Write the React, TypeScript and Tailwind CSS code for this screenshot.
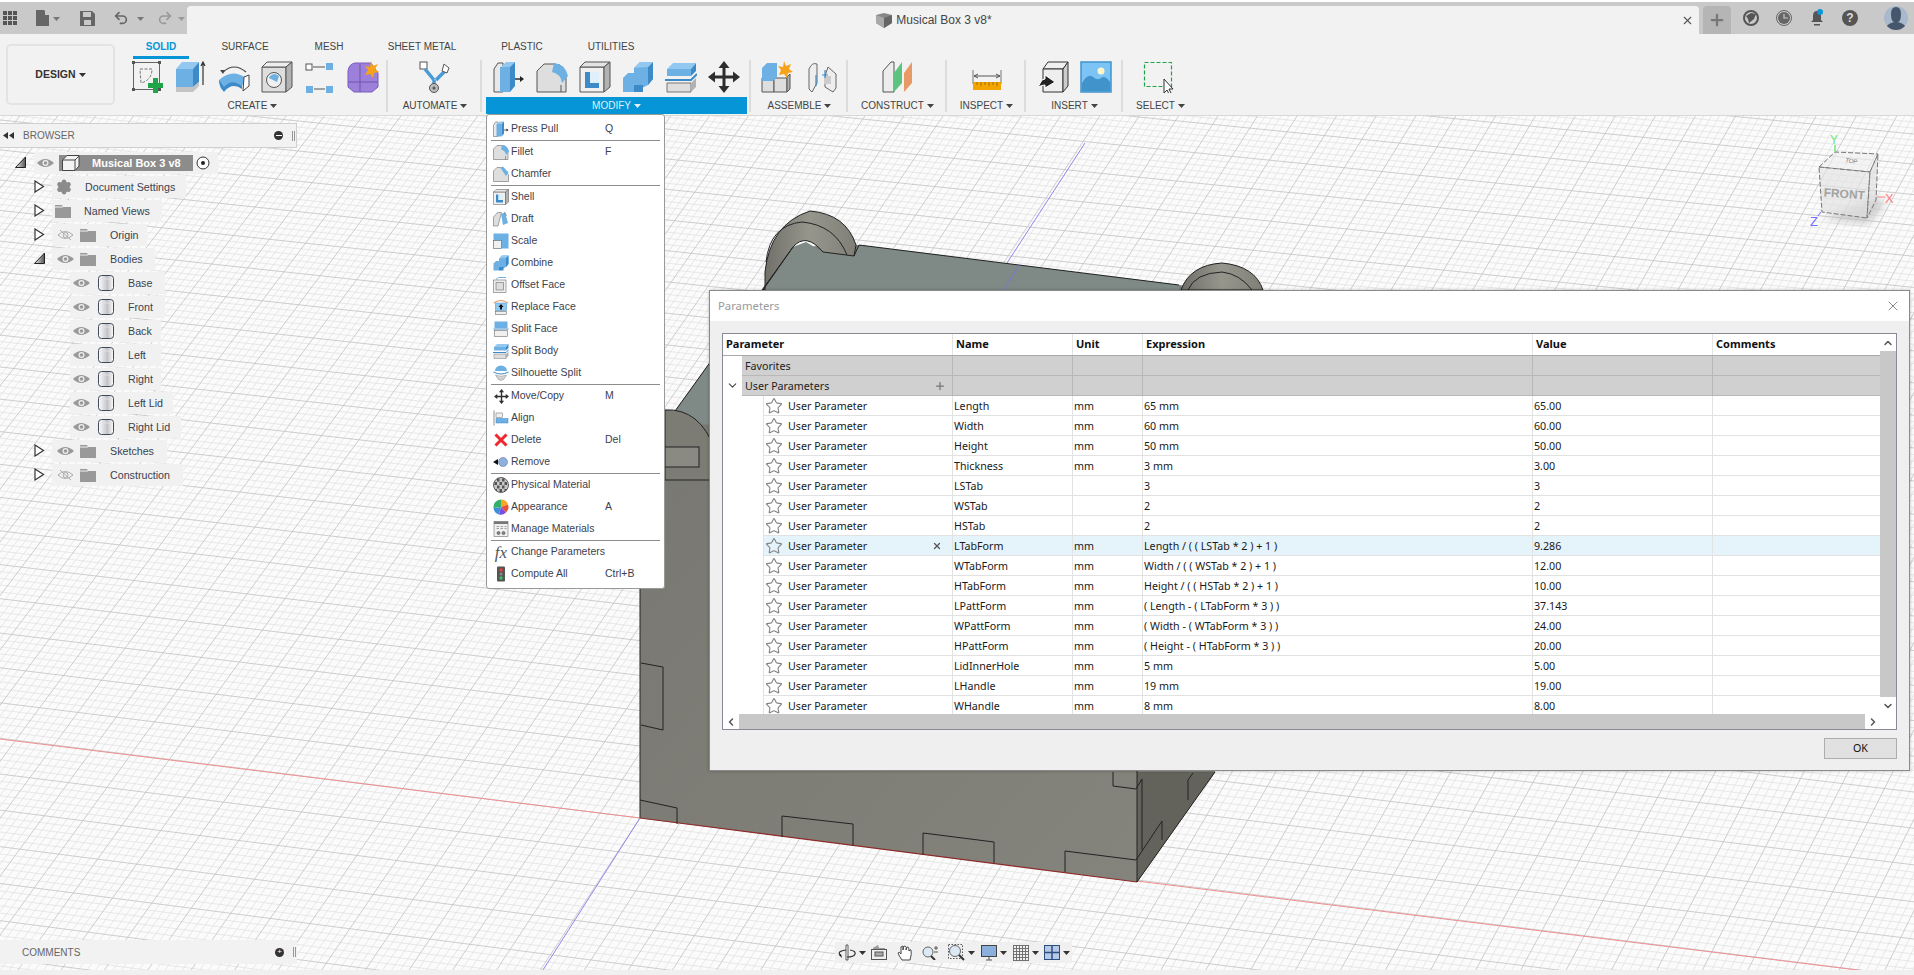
import React, { useMemo } from "react";
import { ChevronDown, ChevronLeft, ChevronRight, ChevronUp, Plus, Redo2, Settings, Star, Undo2, X } from "lucide-react";

const B1 = "#6cb0e4";
const B2 = "#3c8bc8";
const B3 = "#93c8f0";
const G1 = "#dedede";
const G2 = "#b2b2b2";
const K = "#555";

const Sv: React.FC<{ size?: number; children: React.ReactNode }> = ({ size = 32, children }) => (
  <svg width={size} height={size} viewBox="0 0 32 32" className="shrink-0">
    {children}
  </svg>
);

type IconProps = { size?: number };

const SketchIcon = ({ size }: IconProps) => (
  <Sv size={size}>
    <rect x="1.5" y="1.5" width="26" height="27" fill="none" stroke="#666" />
    <path d="M8 8h12q0 11-11 14z" fill="none" stroke="#777" strokeDasharray="3 1.5" />
    {[[0, 0], [26, 0], [0, 27], [26, 27]].map(([x, y]) => (
      <rect key={x + "-" + y} x={x} y={y} width="3" height="3" fill="#555" />
    ))}
    <path d="M21 17h5v5h5v5h-5v5h-5v-5h-5v-5h5z" fill="#1fa44a" />
  </Sv>
);
const ExtrudeIcon = ({ size }: IconProps) => (
  <Sv size={size}>
    <polygon points="1,8 1,26 18,26 18,8" fill={B1} />
    <polygon points="1,8 7,1 24,1 18,8" fill={B3} />
    <polygon points="18,8 24,1 24,21 18,26" fill={B2} />
    <polygon points="1,26 18,26 24,21 24,25 18,31 1,31" fill="#c4c4c4" />
    <path d="M28 24V2M26 5l2-4 2 4" fill="none" stroke="#333" strokeWidth="1.2" />
  </Sv>
);
const RevolveIcon = ({ size }: IconProps) => (
  <Sv size={size}>
    <path d="M5 11Q16 1 28 11" fill="none" stroke="#444" strokeWidth="1.2" />
    <path d="M2 9l3 4 2-4z" fill="#444" />
    <path d="M1 19Q14 7 28 17L24 25Q14 17 6 28Q1 26 1 19z" fill={B1} />
    <path d="M1 19Q1 26 6 31Q14 21 24 28V25Q14 17 6 26z" fill={B2} />
    <path d="M26 16l5-2v11l-6 5z" fill="#fff" stroke="#444" />
  </Sv>
);
const HoleIcon = ({ size }: IconProps) => (
  <Sv size={size}>
    <polygon points="1,6 25,6 25,31 1,31" fill={G1} stroke={K} />
    <polygon points="1,6 6,1 31,1 25,6" fill="#eee" stroke={K} />
    <polygon points="25,6 31,1 31,26 25,31" fill={G2} stroke={K} />
    <circle cx="13" cy="19" r="7.5" fill="#f0f0f0" stroke={K} />
    <path d="M8 17a6 6 0 0 1 10 -2l-2 6z" fill={B1} />
  </Sv>
);
const BoxLinkIcon = ({ size }: IconProps) => (
  <Sv size={size}>
    <rect x="2" y="3" width="6" height="6" fill="#fff" stroke="#555" />
    <rect x="22" y="2" width="7" height="7" fill={B1} />
    <rect x="2" y="25" width="7" height="7" fill={B1} />
    <rect x="22" y="25" width="7" height="7" fill={B1} />
    <path d="M9 6h12M10 28h11" stroke="#555" />
  </Sv>
);
const FormIcon = ({ size }: IconProps) => (
  <Sv size={size}>
    <path d="M1 10Q2 3 8 2h16l7 10v14l-6 5H7l-6-5z" fill="#9c80da" stroke="#7a5cc0" />
    <path d="M1 21h30M13 3v28" stroke="#6f55ad" />
    <polygon points="24,0 26,5 31,3 28,8 32,11 27,12 26,17 23,13 18,14 21,9 18,5 23,6" fill="#f7a21b" />
  </Sv>
);
const AutomateIcon = ({ size }: IconProps) => (
  <Sv size={size}>
    <rect x="1" y="1" width="7" height="7" fill="#fff" stroke="#555" />
    <path d="M6 8l9 11M27 9l-10 10M15 19l0 6" stroke="#4a9ad6" strokeWidth="3.5" fill="none" />
    <path d="M25 3l5 4-2 5-5-2z" fill="#fff" stroke="#555" />
    <circle cx="15" cy="27" r="4.5" fill="#bbb" stroke="#555" />
    <circle cx="15" cy="27" r="1.5" fill="#555" />
  </Sv>
);
const PressPullIcon = ({ size }: IconProps) => (
  <Sv size={size}>
    <path d="M1 31V8L5 2h5v29H1z" fill="#e8e8e8" stroke="#555" />
    <polygon points="8,6 13,1 22,1 17,6" fill={B3} />
    <polygon points="7,6 17,6 17,31 7,31" fill={B1} />
    <polygon points="17,6 22,1 22,25 17,31" fill={B2} />
    <path d="M22 18h6" stroke="#222" strokeWidth="1.4" />
    <path d="M27 15l4 3-4 3z" fill="#222" />
  </Sv>
);
const FilletIcon = ({ size }: IconProps) => (
  <Sv size={size}>
    <path d="M1 31V10L8 3h10q12 0 12 14v14z" fill={G1} stroke={K} />
    <path d="M18 2q11 1 14 13l-6 7q-1-9-10-11z" fill={B1} />
    <path d="M25 24v7" stroke={K} />
  </Sv>
);
const ChamferIcon = ({ size }: IconProps) => (
  <Sv size={size}>
    <path d="M1 31V10L8 3h9l14 14v14z" fill={G1} stroke={K} />
    <polygon points="15,4 20,1 31,13 26,20" fill={B1} />
  </Sv>
);
const ShellIcon = ({ size }: IconProps) => (
  <Sv size={size}>
    <polygon points="1,6 25,6 25,31 1,31" fill="#f0f0f0" stroke={K} />
    <polygon points="1,6 6,1 31,1 25,6" fill="#e4e4e4" stroke={K} />
    <polygon points="25,6 31,1 31,26 25,31" fill={G2} stroke={K} />
    <path d="M6 11h5v11h9v5H6z" fill={B2} />
    <rect x="11" y="11" width="9" height="11" fill="#dff0fb" />
  </Sv>
);
const DraftIcon = ({ size }: IconProps) => (
  <Sv size={size}>
    <path d="M1 30V12L9 3h8l-7 27z" fill={G1} stroke={K} />
    <polygon points="16,6 24,3 30,24 20,28" fill={B1} />
    <path d="M23 2l4 8" stroke="#333" />
  </Sv>
);
const ScaleIcon = ({ size }: IconProps) => (
  <Sv size={size}>
    <rect x="1" y="1" width="30" height="30" fill={B1} />
    <rect x="1" y="15" width="16" height="16" fill="#f0f0f0" stroke={K} />
  </Sv>
);
const CombineIcon = ({ size }: IconProps) => (
  <Sv size={size}>
    <polygon points="1,17 6,12 12,12 12,31 1,31" fill={B1} />
    <polygon points="12,7 18,1 31,1 31,18 26,24 12,31 12,12" fill={B1} />
    <polygon points="26,6 31,1 31,18 26,24" fill={B2} />
    <polygon points="12,7 18,1 31,1 26,6" fill={B3} />
    <polygon points="12,24 21,24 21,31 12,31" fill={B2} />
  </Sv>
);
const OffsetIcon = ({ size }: IconProps) => (
  <Sv size={size}>
    <path d="M6 5l5-4h15" fill="none" stroke={B1} strokeWidth="2" />
    <rect x="1" y="6" width="25" height="25" fill="#f0f0f0" stroke={K} />
    <rect x="6" y="11" width="15" height="15" fill="#ddd" stroke={K} />
  </Sv>
);
const ReplaceIcon = ({ size }: IconProps) => (
  <Sv size={size}>
    <path d="M1 8Q15-2 30 8" fill="none" stroke="#f0905a" strokeWidth="2" />
    <rect x="5" y="8" width="22" height="15" fill={B3} stroke={B2} />
    <path d="M16 10l5 6h-3v5h-4v-5h-3z" fill="#111" />
    <rect x="5" y="25" width="22" height="6" fill="#f0f0f0" stroke={K} />
  </Sv>
);
const SplitFaceIcon = ({ size }: IconProps) => (
  <Sv size={size}>
    <rect x="3" y="1" width="26" height="13" fill={B1} />
    <path d="M1 16h30" stroke={B2} strokeWidth="2" />
    <rect x="3" y="19" width="26" height="12" fill="#efefef" stroke={K} />
  </Sv>
);
const SplitBodyIcon = ({ size }: IconProps) => (
  <Sv size={size}>
    <polygon points="2,8 8,2 31,2 26,8" fill={B3} />
    <polygon points="2,8 26,8 26,15 2,15" fill={B1} />
    <polygon points="26,8 31,2 31,10 26,15" fill={B2} />
    <path d="M0 19l26 0 6-6" fill="none" stroke={B2} strokeWidth="2" />
    <polygon points="2,22 26,22 26,31 2,31" fill={G1} stroke="#777" />
    <polygon points="26,22 31,17 31,26 26,31" fill={G2} />
  </Sv>
);
const SilhouetteIcon = () => (
  <Sv size={16}>
    <path d="M4 12a12 11 0 0 1 24 0z" fill={B1} />
    <path d="M1 14Q16 22 31 14" fill="none" stroke={B2} strokeWidth="2" />
    <path d="M5 20Q16 25 27 20Q22 31 16 31T5 20z" fill="#d4d4d4" stroke="#888" />
  </Sv>
);
const MoveIcon = ({ size }: IconProps) => (
  <Sv size={size}>
    <path
      d="M16 0l5.5 7h-4v7.5h7.5v-4L32 16l-7 5.5v-4h-7.500v7.5h4L16 32l-5.5-7h4v-7.5H7v4L0 16l7-5.5v4h7.5V7h-4z"
      fill="#2d2d2d"
    />
  </Sv>
);
const AlignIcon = () => (
  <Sv size={16}>
    <path d="M2 1v30" stroke="#444" strokeWidth="1.2" />
    <rect x="6" y="6" width="13" height="9" fill="#f0f0f0" stroke="#666" />
    <rect x="6" y="17" width="24" height="9" fill={B1} stroke={B2} />
  </Sv>
);
const RemoveIcon = () => (
  <Sv size={16}>
    <path d="M0 16l10-6v12z" fill="#111" />
    <circle cx="20" cy="16" r="9" fill="#8fb0dc" stroke="#4d6a96" />
  </Sv>
);
const MaterialIcon = () => (
  <Sv size={16}>
    <defs>
      <clipPath id="materialClip">
        <circle cx="16" cy="16" r="15" />
      </clipPath>
    </defs>
    <g clipPath="url(#materialClip)">
      <rect width="32" height="32" fill="#c8c8c8" />
      {[[10, 4], [20, 4], [5, 11], [15, 11], [25, 11], [10, 18], [20, 18], [5, 25], [15, 25], [25, 25]].map(([x, y]) => (
        <rect key={x + "-" + y} x={x - 2} y={y - 1} width="5" height="6" fill="#555" />
      ))}
    </g>
    <circle cx="16" cy="16" r="15" fill="none" stroke="#333" strokeWidth="1.5" />
  </Sv>
);
const AppearanceIcon = () => (
  <Sv size={16}>
    <path d="M16 16V1A15 15 0 0 1 30 11z" fill="#f5a623" />
    <path d="M16 16L30 11A15 15 0 0 1 26 27z" fill="#e8503a" />
    <path d="M16 16L26 27A15 15 0 0 1 12 31z" fill="#7a4fe0" />
    <path d="M16 16L12 31A15 15 0 0 1 1 18z" fill="#3f8fdc" />
    <path d="M16 16L1 18A15 15 0 0 1 16 1z" fill="#35b06a" />
  </Sv>
);
const ManageIcon = () => (
  <Sv size={16}>
    <rect x="2" y="1" width="28" height="30" fill="#f0f0f0" stroke="#555" />
    <rect x="2" y="1" width="28" height="5" fill="#777" />
    <path d="M7 11h5M15 11h5M23 11h4M7 15h5M15 15h5M23 15h4" stroke="#888" strokeWidth="1.5" />
    <circle cx="11" cy="24" r="3" fill="#888" stroke="#333" />
    <circle cx="21" cy="24" r="3" fill="#888" stroke="#333" />
  </Sv>
);
const ComputeIcon = () => (
  <Sv size={16}>
    <rect x="8" y="1" width="16" height="30" rx="2" fill="#555" />
    <circle cx="16" cy="8" r="3.5" fill="#e8403a" />
    <circle cx="16" cy="16" r="3" fill="#888" />
    <circle cx="16" cy="24" r="3.5" fill="#35c06a" />
  </Sv>
);
const DeleteIcon = () => (
  <Sv size={16}>
    <path d="M5 5l22 22M27 5L5 27" stroke="#f0282d" strokeWidth="6" />
  </Sv>
);

const AssembleIcon = () => (
  <Sv>
    <polygon points="1,17 13,17 13,31 1,31" fill={G1} stroke={K} />
    <polygon points="13,17 26,17 26,31 13,31" fill={G1} stroke={K} />
    <polygon points="26,16 29,13 29,28 26,31" fill={G2} stroke={K} />
    <polygon points="1,7 6,2 16,2 16,16 12,20 1,20" fill={B1} />
    <polygon points="23,0 25,5 30,3 28,8 32,11 27,12 26,17 23,13 18,14 20,9 17,5 22,6" fill="#f7a21b" />
  </Sv>
);
const JointIcon = () => (
  <Sv>
    <path d="M2 28V8Q5 1 10 3V22L5 31z" fill="#eee" stroke="#666" />
    <path d="M18 15l3-9 8 7v14l-3 4-8-5z" fill="#eee" stroke="#666" />
    <rect x="17" y="15" width="7" height="8" fill="#ccc" />
    <path d="M9 14v11M18 9v8M15 14h6" stroke={B2} strokeWidth="1.2" />
  </Sv>
);
const ConstructIcon = () => (
  <Sv>
    <polygon points="1,10 9,1 12,1 12,31 1,31" fill="#ececec" stroke={K} />
    <polygon points="12,12 20,1 20,22 12,31" fill="#5cc47e" />
    <polygon points="22,12 30,1 30,22 22,31" fill="#e89a66" />
  </Sv>
);
const InspectIcon = () => (
  <Sv>
    <path d="M2 9v14M30 9v14" stroke="#777" />
    <path d="M3 15h26M7 13l-4 2 4 2M25 13l4 2-4 2" stroke="#555" fill="none" />
    <rect x="2" y="21" width="28" height="8" fill="#f2a500" />
    <path d="M6 21v3M10 21v4M14 21v3M18 21v4M22 21v3M26 21v4" stroke="#a46e00" />
  </Sv>
);
const InsertIcon = () => (
  <Sv>
    <polygon points="5,8 10,1 30,1 25,8" fill="#f0f0f0" stroke="#333" />
    <polygon points="5,8 25,8 25,31 5,31" fill="#eee" stroke="#333" />
    <polygon points="25,8 30,1 30,25 25,31" fill="#ccc" stroke="#333" />
    <path d="M0 26l4-7 3-1v-4l10 7-10 6v-3q-3 0-7 2z" fill="#222" stroke="#fff" />
  </Sv>
);
const ImageIcon = () => (
  <Sv>
    <rect x="1" y="1" width="30" height="30" fill="#7cc4f5" stroke="#4193cc" strokeWidth="1.5" />
    <circle cx="21" cy="10" r="3.5" fill="#fff7c8" />
    <path d="M2 30V22q6-10 11-6t8 1q4-3 9 4v9z" fill="#4193cc" />
  </Sv>
);
const SelectIcon = () => (
  <Sv>
    <rect x="1.5" y="1.5" width="27" height="24" fill="none" stroke="#1fa44a" strokeDasharray="4 2" strokeWidth="1.2" />
    <path d="M21 18v14l3-3 2 4 2-1-2-4h4z" fill="#fff" stroke="#333" />
  </Sv>
);

const Caret = () => (
  <svg width="7" height="4" viewBox="0 0 7 4" className="ml-[3px] inline-block shrink-0">
    <path d="M0 0h7L3.5 4z" fill="currentColor" />
  </svg>
);

const RibbonGroup: React.FC<{ label: string; className: string; labelClass?: string; children: React.ReactNode; last?: boolean }> = ({
  label,
  className,
  labelClass = "",
  children,
  last,
}) => (
  <div className={`relative flex h-[56px] flex-col ${className} ${last ? "" : "after:absolute after:right-0 after:top-[1px] after:h-[52px] after:w-[2px] after:bg-[#dcdcdc]"}`}>
    <div className="mt-[2px] flex h-[32px] items-center justify-center">{children}</div>
    <div className={`mt-[4px] flex h-[17px] items-center justify-center text-[10px] text-[#444] ${labelClass}`}>
      {label}
      <Caret />
    </div>
  </div>
);

const TabLabel: React.FC<{ label: string; className: string; active?: boolean }> = ({ label, className, active }) => (
  <div className={`relative flex h-[25px] items-center justify-center text-[10px] ${className} ${active ? "font-bold text-[#0696d7]" : "text-[#444]"}`}>
    {label}
    {active && <div className="absolute bottom-0 left-0 right-0 h-[3px] bg-[#0696d7]" />}
  </div>
);

const Ribbon = () => (
  <div className="flex h-[82px] shrink-0 border-b border-[#d8d8d8] bg-[#f2f2f2]">
    <div className="flex w-[125px] shrink-0 items-start pl-[6px] pt-[10px]">
      <div className="flex h-[61px] w-[109px] items-center justify-center rounded-[5px] border-2 border-[#e3e3e3] pt-[1px] text-[10.5px] font-bold text-[#333]">
        DESIGN
        <Caret />
      </div>
    </div>
    <div className="flex flex-col">
      <div className="ml-[8px] flex">
        <TabLabel label="SOLID" className="w-[56px]" active />
        <TabLabel label="SURFACE" className="w-[112px]" />
        <TabLabel label="MESH" className="w-[56px]" />
        <TabLabel label="SHEET METAL" className="w-[130px]" />
        <TabLabel label="PLASTIC" className="w-[70px]" />
        <TabLabel label="UTILITIES" className="w-[108px]" />
      </div>
      <div className="flex">
        <RibbonGroup label="CREATE" className="w-[263px]" labelClass="pr-[8px]">
          <div className="flex gap-[11px] pr-[3px]">
            <SketchIcon />
            <ExtrudeIcon />
            <RevolveIcon />
            <HoleIcon />
            <BoxLinkIcon />
            <FormIcon />
          </div>
        </RibbonGroup>
        <RibbonGroup label="AUTOMATE" className="w-[94px]">
          <AutomateIcon />
        </RibbonGroup>
        <div className="relative flex h-[56px] w-[269px] flex-col after:absolute after:right-0 after:top-[1px] after:h-[52px] after:w-[2px] after:bg-[#dcdcdc]">
          <div className="ml-[11px] mt-[2px] flex h-[32px] items-center gap-[11px]">
            <PressPullIcon />
            <FilletIcon />
            <ShellIcon />
            <CombineIcon />
            <SplitBodyIcon />
            <MoveIcon />
          </div>
          <div className="ml-[4px] mt-[4px] flex h-[17px] w-[261px] items-center justify-center bg-[#0696d7] text-[10px] text-[#dff1fb]">
            MODIFY
            <Caret />
          </div>
        </div>
        <RibbonGroup label="ASSEMBLE" className="w-[97px]">
          <div className="flex gap-[14px]">
            <AssembleIcon />
            <JointIcon />
          </div>
        </RibbonGroup>
        <RibbonGroup label="CONSTRUCT" className="w-[99px]">
          <ConstructIcon />
        </RibbonGroup>
        <RibbonGroup label="INSPECT" className="w-[79px]">
          <InspectIcon />
        </RibbonGroup>
        <RibbonGroup label="INSERT" className="w-[97px]">
          <div className="flex gap-[10px]">
            <InsertIcon />
            <ImageIcon />
          </div>
        </RibbonGroup>
        <RibbonGroup label="SELECT" className="w-[72px]" labelClass="pl-[3px]" last>
          <SelectIcon />
        </RibbonGroup>
      </div>
    </div>
  </div>
);

const TitleBar = () => (
  <div className="flex h-[34px] shrink-0 border-t-2 border-white bg-[#c9c9c9]">
    <div className="flex w-[187px] shrink-0 items-center text-[#666]">
      <svg width="15" height="14" viewBox="0 0 15 14" className="ml-[3px]">
        {[0, 5, 10].map((x) =>
          [0, 5, 10].map((y) => <rect key={x + "-" + y} x={x} y={y} width="4" height="4" fill="#555" />)
        )}
      </svg>
      <svg width="14" height="16" viewBox="0 0 14 16" className="ml-[18px]">
        <path d="M0 0h8l5 5v11H0z" fill="#666" />
        <path d="M9 0l5 5H9z" fill="#c9c9c9" />
      </svg>
      <span className="text-[#777]"><Caret /></span>
      <svg width="15" height="15" viewBox="0 0 15 15" className="ml-[20px]">
        <path d="M0 0h12l3 3v12H0z" fill="#666" />
        <rect x="3" y="1" width="8" height="5" fill="#c9c9c9" />
        <rect x="4" y="9" width="7" height="5" fill="#c9c9c9" />
      </svg>
      <Undo2 size={16} strokeWidth={2.5} className="ml-[18px] text-[#666]" />
      <span className="ml-[5px] text-[#777]"><Caret /></span>
      <Redo2 size={16} strokeWidth={2.5} className="ml-[13px] text-[#999]" />
      <span className="ml-[2px] text-[#999]"><Caret /></span>
    </div>
    <div className="mt-[4px] flex h-[28px] w-[1512px] items-center rounded-t-[4px] bg-[#f2f2f2]">
      <div className="flex flex-1 items-center justify-center text-[12px] text-[#444]">
        <svg width="16" height="15" viewBox="0 0 16 15" className="mr-[4px]">
          <path d="M0 2l8-2 8 2v8l-8 5-8-5z" fill="#888" />
          <path d="M0 2l8 3v10l-8-5z" fill="#aaa" />
          <path d="M8 5l8-3v8l-8 5z" fill="#666" />
        </svg>
        Musical Box 3 v8*
      </div>
      <X size={13} strokeWidth={2} className="mr-[5px] text-[#555]" />
    </div>
    <div className="ml-[4px] mt-[4px] flex h-[28px] w-[28px] items-center justify-center rounded-t-[4px] bg-[#b5b5b5]">
      <Plus size={18} strokeWidth={3} className="text-[#777]" />
    </div>
    <div className="flex flex-1 items-center pl-[12px]">
      <svg width="16" height="16" viewBox="0 0 16 16">
        <circle cx="8" cy="8" r="7" fill="none" stroke="#555" strokeWidth="2" />
        <path d="M3 6l5-3 5 1-2 5-5 4-1-4z" fill="#555" />
      </svg>
      <svg width="16" height="16" viewBox="0 0 16 16" className="ml-[17px]">
        <circle cx="8" cy="8" r="7.5" fill="none" stroke="#666" />
        <circle cx="8" cy="8" r="6" fill="#666" />
        <path d="M8 4v4h4" fill="none" stroke="#c9c9c9" strokeWidth="1.2" />
      </svg>
      <svg width="16" height="18" viewBox="0 0 16 18" className="ml-[17px]">
        <path d="M8 2q4 0 4 5v4l2 2H2l2-2V7q0-5 4-5z" fill="#555" />
        <rect x="5" y="15" width="6" height="1.5" fill="#555" />
        <circle cx="11" cy="3" r="3" fill="#0696d7" />
      </svg>
      <div className="ml-[17px] flex h-[16px] w-[16px] items-center justify-center rounded-full bg-[#555] text-[12px] font-bold text-[#ddd]">?</div>
      <div className="relative ml-[26px] h-[24px] w-[24px] overflow-hidden rounded-full bg-[#a9b8cc]">
        <svg width="24" height="24" viewBox="0 0 24 24" className="absolute inset-0">
          <path d="M12 1q5 0 5 7t-3 8q8 2 9 8H1q1-6 9-8-3-1-3-8t5-7z" fill="#46566c" />
        </svg>
      </div>
    </div>
  </div>
);

const Eye: React.FC<{ off?: boolean }> = ({ off }) =>
  off ? (
    <svg width="17" height="12" viewBox="0 0 17 12" className="shrink-0">
      <path d="M1 6q7-7 15 0q-8 7-15 0z" fill="none" stroke="#aaa" />
      <circle cx="8.5" cy="6" r="2.5" fill="none" stroke="#aaa" />
      <path d="M3 1l11 10" stroke="#aaa" />
    </svg>
  ) : (
    <svg width="17" height="12" viewBox="0 0 17 12" className="shrink-0">
      <path d="M0 6q8-8 17 0q-9 8-17 0z" fill="#999" />
      <circle cx="8.5" cy="6" r="3" fill="#f1f1f1" />
      <circle cx="8.5" cy="6" r="1.8" fill="#999" />
    </svg>
  );

const Folder = () => (
  <svg width="16" height="13" viewBox="0 0 16 13" className="shrink-0">
    <path d="M0 0h7l1 2h8v11H0z" fill="#999" />
    <path d="M0 2h8" stroke="#f1f1f1" />
  </svg>
);

const BodyIcon = () => (
  <svg width="16" height="16" viewBox="0 0 16 16" className="shrink-0">
    <defs>
      <linearGradient id="bodyFill" x1="0" x2="1">
        <stop offset="0" stopColor="#fff" />
        <stop offset="0.6" stopColor="#c2c2c8" />
        <stop offset="1" stopColor="#fff" />
      </linearGradient>
    </defs>
    <rect x="0.5" y="0.5" width="15" height="15" rx="3" fill="url(#bodyFill)" stroke="#3d4a5c" />
    <path d="M1 4h14" stroke="#e4e4e4" />
  </svg>
);

const Arrow: React.FC<{ open?: boolean }> = ({ open }) => (
  <svg width="11" height="13" viewBox="0 0 11 13" className="shrink-0">
    <defs>
      <linearGradient id="arrowFill" x1="0" x2="1">
        <stop offset="0" stopColor="#eee" />
        <stop offset="1" stopColor="#555" />
      </linearGradient>
    </defs>
    {open ? (
      <path d="M0.5 11.5L10.5 1v10.5z" fill="url(#arrowFill)" stroke="#222" />
    ) : (
      <path d="M1 1l8.5 5.5L1 12z" fill="#fff" stroke="#333" strokeWidth="1.2" />
    )}
  </svg>
);

const TreeRow: React.FC<{ pill: string; arrow: "open" | "closed"; children: React.ReactNode; label: string }> = ({
  pill,
  arrow,
  children,
  label,
}) => (
  <div className="relative ml-[52px] flex h-[24px] items-center">
    <div className="absolute left-0 top-[5px] -translate-x-[18px]">
      <Arrow open={arrow === "open"} />
    </div>
    <div className={`flex h-[22px] items-center bg-[#f1f1f1] pl-[3px] ${pill}`}>
      {children}
      <span>{label}</span>
    </div>
  </div>
);

const BODIES = [
  ["Base", "w-[95px]"],
  ["Front", "w-[95px]"],
  ["Back", "w-[91px]"],
  ["Left", "w-[91px]"],
  ["Right", "w-[91px]"],
  ["Left Lid", "w-[103px]"],
  ["Right Lid", "w-[111px]"],
];

const BrowserPanel = () => (
  <div className="absolute left-0 top-[7px] z-10 w-[297px] text-[10.7px] text-[#3b4250]">
    <div className="flex h-[25px] items-center border-y border-r border-[#cfcfcf] bg-[#f2f2f2] pl-[3px] text-[#666]">
      <svg width="11" height="7" viewBox="0 0 11 7">
        <path d="M5 0v7L0 3.5zM11 0v7L6 3.5z" fill="#333" />
      </svg>
      <span className="ml-[9px] flex-1 text-[10px]">BROWSER</span>
      <div className="mr-[9px] flex h-[9px] w-[9px] items-center justify-center rounded-full bg-[#333]">
        <div className="h-[1.5px] w-[6px] bg-white" />
      </div>
      <div className="mr-[1px] h-[10px] w-[3px] border-x border-[#999]" />
    </div>
    <div className="mt-[3px] flex flex-col">
      <div className="relative ml-[34px] flex h-[24px] items-center">
        <div className="absolute -left-[19px] top-[5px]">
          <Arrow open />
        </div>
        <div className="flex h-[22px] w-[184px] items-center bg-[#f1f1f1] pl-[3px]">
          <Eye />
          <div className="ml-[5px] flex h-[16px] w-[134px] items-center bg-[#8c8c8c]">
            <svg width="18" height="16" viewBox="0 0 18 16" className="ml-[3px] shrink-0">
              <path d="M0.5 5L5 0.5h12V11l-4 4.5H0.5z" fill="#f4f4f4" stroke="#444" />
              <path d="M13 15V5H1M13 5l4-4" fill="none" stroke="#444" />
            </svg>
            <span className="ml-[12px] text-[11px] font-bold text-white">Musical Box 3 v8</span>
          </div>
          <svg width="14" height="14" viewBox="0 0 14 14" className="ml-[3px]">
            <circle cx="7" cy="7" r="6" fill="#fff" stroke="#333" />
            <circle cx="7" cy="7" r="2" fill="#222" />
          </svg>
        </div>
      </div>
      <TreeRow pill="w-[134px]" arrow="closed" label="Document Settings">
        <Settings size={16} fill="#8c8c8c" stroke="#8c8c8c" strokeWidth={2.5} className="ml-[1px] mr-[13px] shrink-0" />
      </TreeRow>
      <TreeRow pill="w-[110px]" arrow="closed" label="Named Views">
        <div className="mr-[13px]">
          <Folder />
        </div>
      </TreeRow>
      <TreeRow pill="w-[95px]" arrow="closed" label="Origin">
        <div className="ml-[2px]"><Eye off /></div>
        <div className="ml-[6px] mr-[14px]"><Folder /></div>
      </TreeRow>
      <TreeRow pill="w-[103px]" arrow="open" label="Bodies">
        <div className="ml-[2px]"><Eye /></div>
        <div className="ml-[6px] mr-[14px]"><Folder /></div>
      </TreeRow>
      {BODIES.map(([name, width]) => (
        <div key={name} className="ml-[70px] flex h-[24px] items-center">
          <div className={`flex h-[22px] items-center bg-[#f1f1f1] pl-[3px] ${width}`}>
            <Eye />
            <div className="ml-[8px] mr-[14px]"><BodyIcon /></div>
            <span>{name}</span>
          </div>
        </div>
      ))}
      <TreeRow pill="w-[115px]" arrow="closed" label="Sketches">
        <div className="ml-[2px]"><Eye /></div>
        <div className="ml-[6px] mr-[14px]"><Folder /></div>
      </TreeRow>
      <TreeRow pill="w-[131px]" arrow="closed" label="Construction">
        <div className="ml-[2px]"><Eye off /></div>
        <div className="ml-[6px] mr-[14px]"><Folder /></div>
      </TreeRow>
    </div>
  </div>
);

type MenuEntry = { label: string; key?: string; icon: React.ReactNode } | "divider";

const MENU: MenuEntry[] = [
  { label: "Press Pull", key: "Q", icon: <PressPullIcon size={16} /> },
  "divider",
  { label: "Fillet", key: "F", icon: <FilletIcon size={16} /> },
  { label: "Chamfer", icon: <ChamferIcon size={16} /> },
  "divider",
  { label: "Shell", icon: <ShellIcon size={16} /> },
  { label: "Draft", icon: <DraftIcon size={16} /> },
  { label: "Scale", icon: <ScaleIcon size={16} /> },
  { label: "Combine", icon: <CombineIcon size={16} /> },
  { label: "Offset Face", icon: <OffsetIcon size={16} /> },
  { label: "Replace Face", icon: <ReplaceIcon size={16} /> },
  { label: "Split Face", icon: <SplitFaceIcon size={16} /> },
  { label: "Split Body", icon: <SplitBodyIcon size={16} /> },
  { label: "Silhouette Split", icon: <SilhouetteIcon /> },
  "divider",
  { label: "Move/Copy", key: "M", icon: <MoveIcon size={15} /> },
  { label: "Align", icon: <AlignIcon /> },
  { label: "Delete", key: "Del", icon: <DeleteIcon /> },
  { label: "Remove", icon: <RemoveIcon /> },
  "divider",
  { label: "Physical Material", icon: <MaterialIcon /> },
  { label: "Appearance", key: "A", icon: <AppearanceIcon /> },
  { label: "Manage Materials", icon: <ManageIcon /> },
  "divider",
  {
    label: "Change Parameters",
    icon: <span className="[font-family:'Liberation_Serif',serif] text-[17px] italic leading-none text-[#555]">fx</span>,
  },
  { label: "Compute All", key: "Ctrl+B", icon: <ComputeIcon /> },
];

const ModifyMenu = () => (
  <div className="absolute -top-[2px] left-[486px] z-20 w-[179px] rounded-[3px] border border-[#999] bg-white px-[4px] py-[3px] text-[10.5px] text-[#3b4250]">
    {MENU.map((item, i) =>
      item === "divider" ? (
        <div key={i} className="h-[1px] bg-[#8d8d8d]" />
      ) : (
        <div key={item.label} className="flex h-[22px] items-center">
          <div className="flex w-[20px] shrink-0 items-center justify-center">{item.icon}</div>
          <span className="w-[94px] shrink-0">{item.label}</span>
          {item.key && <span>{item.key}</span>}
        </div>
      )
    )}
  </div>
);

const ROWS = [
  ["Length", "mm", "65 mm", "65.00"],
  ["Width", "mm", "60 mm", "60.00"],
  ["Height", "mm", "50 mm", "50.00"],
  ["Thickness", "mm", "3 mm", "3.00"],
  ["LSTab", "", "3", "3"],
  ["WSTab", "", "2", "2"],
  ["HSTab", "", "2", "2"],
  ["LTabForm", "mm", "Length / ( ( LSTab * 2 ) + 1 )", "9.286"],
  ["WTabForm", "mm", "Width / ( ( WSTab * 2 ) + 1 )", "12.00"],
  ["HTabForm", "mm", "Height / ( ( HSTab * 2 ) + 1 )", "10.00"],
  ["LPattForm", "mm", "( Length - ( LTabForm * 3 ) )", "37.143"],
  ["WPattForm", "mm", "( Width - ( WTabForm * 3 ) )", "24.00"],
  ["HPattForm", "mm", "( Height - ( HTabForm * 3 ) )", "20.00"],
  ["LidInnerHole", "mm", "5 mm", "5.00"],
  ["LHandle", "mm", "19 mm", "19.00"],
  ["WHandle", "mm", "8 mm", "8.00"],
];

const COLS = "grid grid-cols-[229px_120px_70px_390px_180px_169px]";

const GroupRow: React.FC<{ label: string; open?: boolean }> = ({ label, open }) => (
  <div className={`${COLS} h-[20px]`}>
    <div className="relative flex pl-[19px]">
      {open && <ChevronDown size={13} strokeWidth={2} className="absolute left-[3px] top-[3px] text-[#444]" />}
      <div className="flex flex-1 items-center justify-between border-b border-[#b8b8b8] bg-[#d0d0d0] pl-[3px] pr-[6px] pt-[1px] text-[#222]">
        {label}
        {open && <Plus size={12} strokeWidth={2.5} className="text-[#777]" />}
      </div>
    </div>
    {[0, 1, 2, 3, 4].map((i) => (
      <div key={i} className="border-b border-l border-[#b8b8b8] bg-[#d0d0d0]" />
    ))}
  </div>
);

const ParamRow: React.FC<{ row: string[]; hover?: boolean }> = ({ row, hover }) => {
  const bg = hover ? "bg-[#e5f3fb]" : "bg-white";
  return (
    <div className={`${COLS} h-[20px] shrink-0 text-[#1a1a1a]`}>
      <div className="flex pl-[40px]">
        <div className={`flex flex-1 items-center border-b border-l border-[#e2e2e2] pl-[1px] ${bg}`}>
          <Star size={18} strokeWidth={1.5} className="shrink-0 text-[#858585]" />
          <span className="ml-[5px] flex-1 pt-[1px]">User Parameter</span>
          {hover && <X size={10} strokeWidth={3} className="mr-[10px] text-[#555]" />}
        </div>
      </div>
      {row.map((cell, i) => (
        <div key={i} className={`flex items-center border-b border-l border-[#e2e2e2] pl-[1px] pt-[1px] ${bg}`}>
          {cell}
        </div>
      ))}
      <div className={`border-b border-l border-[#e2e2e2] ${bg}`} />
    </div>
  );
};

const HEADERS = ["Parameter", "Name", "Unit", "Expression", "Value", "Comments"];

const ParametersDialog = () => (
  <div className="absolute left-[709px] top-[174px] z-10 flex h-[481px] w-[1201px] flex-col border border-[#8a8a8a] bg-[#efefef] shadow-[0_0_3px_rgba(0,0,0,0.25)] [font-family:'Noto_Sans',sans-serif] text-[10.7px]">
    <div className="flex h-[30px] shrink-0 items-center justify-between bg-white pl-[8px] pr-[8px] text-[11.3px] text-[#9a9a9a]">
      Parameters
      <X size={16} strokeWidth={1} className="text-[#555]" />
    </div>
    <div className="mx-[12px] mt-[12px] flex h-[397px] flex-col border border-[#8a8a94] bg-white">
      <div className="flex min-h-0 flex-1">
        <div className="w-[1158px] overflow-hidden">
          <div className={`${COLS} h-[22px] border-b border-[#aaa]`}>
            {HEADERS.map((h, i) => (
              <div key={h} className={`flex items-center pl-[3px] text-[11px] font-bold text-[#111] ${i ? "border-l border-[#e4e4e4]" : ""}`}>
                {h}
              </div>
            ))}
          </div>
          <GroupRow label="Favorites" />
          <GroupRow label="User Parameters" open />
          {ROWS.map((row) => (
            <ParamRow key={row[0]} row={row} hover={row[0] === "LTabForm"} />
          ))}
        </div>
        <div className="flex w-[16px] flex-col bg-[#c8c8c8]">
          <div className="flex h-[17px] items-center justify-center bg-white">
            <ChevronUp size={12} strokeWidth={3} className="text-[#555]" />
          </div>
          <div className="flex-1" />
          <div className="flex h-[17px] items-center justify-center bg-white">
            <ChevronDown size={12} strokeWidth={3} className="text-[#555]" />
          </div>
        </div>
      </div>
      <div className="flex h-[15px] shrink-0">
        <div className="flex w-[16px] items-center justify-center">
          <ChevronLeft size={12} strokeWidth={3} className="text-[#555]" />
        </div>
        <div className="w-[1126px] bg-[#c8c8c8]" />
        <div className="flex w-[16px] items-center justify-center">
          <ChevronRight size={12} strokeWidth={3} className="text-[#555]" />
        </div>
      </div>
    </div>
    <div className="mr-[12px] mt-[8px] flex justify-end">
      <div className="flex h-[21px] w-[73px] items-center justify-center border border-[#adadad] bg-[#e1e1e1] text-[#111]">OK</div>
    </div>
  </div>
);

const NavBar = () => (
  <div className="absolute bottom-[12px] left-[835px] z-10 flex h-[21px] w-[237px] items-center bg-[#f0f0f0] pl-[3px] text-[#333]">
    <svg width="18" height="18" viewBox="0 0 18 18">
      <path d="M8 1h2v15H8z" fill="#fff" stroke="#333" strokeWidth="0.8" />
      <path d="M2 11q-3-4 6-5m4 0q6 1 5 4-1 3-8 3" fill="none" stroke="#333" strokeWidth="1.2" />
      <path d="M1 11l3 3-1-4z" fill="#111" />
    </svg>
    <Caret />
    <svg width="16" height="15" viewBox="0 0 16 15" className="ml-[5px]">
      <path d="M2 3l5-3 1 3h6v2H2z" fill="#999" />
      <rect x="0.5" y="4.5" width="15" height="10" fill="#eee" stroke="#555" />
      <rect x="4" y="7" width="8" height="4" fill="#aaa" stroke="#555" />
    </svg>
    <svg width="16" height="16" viewBox="0 0 16 16" className="ml-[10px]">
      <path d="M5 15Q2 11 1 8q1-2 3 1V2q2-2 2 0v3q0-5 2-4t1 4q1-4 2-3t1 4q1-2 2-1 1 4-1 10z" fill="#fff" stroke="#333" strokeWidth="0.9" />
    </svg>
    <svg width="17" height="15" viewBox="0 0 17 15" className="ml-[9px]">
      <circle cx="6" cy="7" r="5" fill="#dce9f4" stroke="#666" />
      <path d="M9 11l4 4" stroke="#333" strokeWidth="2" />
      <path d="M12 3h4M14 1v4M12 7h4" stroke="#555" />
    </svg>
    <svg width="17" height="17" viewBox="0 0 17 17" className="ml-[9px]">
      <rect x="0.5" y="0.5" width="14" height="14" fill="none" stroke="#555" strokeDasharray="1.5 1.5" />
      <circle cx="7" cy="7" r="5.5" fill="#dce9f4" stroke="#666" />
      <path d="M11 11l5 5" stroke="#333" strokeWidth="2" />
    </svg>
    <Caret />
    <svg width="16" height="16" viewBox="0 0 16 16" className="ml-[6px]">
      <rect x="0.5" y="0.5" width="15" height="11" fill="#8cb0dc" stroke="#444" />
      <path d="M5 15h6M8 12v3" stroke="#555" />
    </svg>
    <Caret />
    <svg width="16" height="16" viewBox="0 0 16 16" className="ml-[6px]">
      {[0, 1, 2, 3, 4, 5].map((i) => (
        <path key={i} d={`M${i * 3 + 0.5} 0v16M0 ${i * 3 + 0.5}h16`} stroke="#666" strokeWidth="0.9" />
      ))}
    </svg>
    <Caret />
    <svg width="16" height="15" viewBox="0 0 16 15" className="ml-[5px]">
      <rect x="0.5" y="0.5" width="15" height="14" fill="#b6cae8" stroke="#2f4e80" />
      <path d="M8 0v15M0 7.5h16" stroke="#2f4e80" strokeWidth="1.5" />
    </svg>
    <Caret />
  </div>
);

// perspective grid plane, same numbers as the red and blue axes below
const useGrid = () =>
  useMemo(() => {
    const O = [640, 818];
    const VA = [-30000, -3000];
    const VB = [5880, -7182];
    const a = 0.00026;
    const b = 0.00084;
    const pt = (u: number, v: number) => {
      const w = 1 + u * a + v * b;
      const x = (O[0] + u * a * VA[0] + v * b * VB[0]) / w;
      const y = (O[1] + u * a * VA[1] + v * b * VB[1]) / w;
      return `${x.toFixed(1)} ${y.toFixed(1)}`;
    };
    let minor = "";
    let major = "";
    for (let u = -320; u <= 340; u++) {
      const d = `M${pt(u, -70)}L${pt(u, 260)}`;
      if (u % 5 === 0) major += d;
      else minor += d;
    }
    for (let v = -70; v <= 260; v++) {
      const d = `M${pt(-320, v)}L${pt(340, v)}`;
      if (v % 5 === 0) major += d;
      else minor += d;
    }
    return { minor, major };
  }, []);

const Scene = () => {
  const { minor, major } = useGrid();
  return (
    <svg className="absolute inset-0 h-full w-full" viewBox="0 116 1914 859" preserveAspectRatio="none">
      <defs>
        <linearGradient id="faceFill" x1="0" x2="1" y1="0" y2="1">
          <stop offset="0" stopColor="#767670" />
          <stop offset="1" stopColor="#85857d" />
        </linearGradient>
        <linearGradient id="ringFill" x1="0" x2="1">
          <stop offset="0" stopColor="#6f6f68" />
          <stop offset="0.5" stopColor="#96968d" />
          <stop offset="1" stopColor="#7f7f77" />
        </linearGradient>
        <filter id="cubeShadow">
          <feGaussianBlur stdDeviation="4" />
        </filter>
      </defs>
      <rect x="0" y="116" width="1914" height="859" fill="#fbfbfb" />
      <path d={minor} stroke="#dfdfdf" strokeWidth="0.7" fill="none" />
      <path d={major} stroke="#c2c2c2" strokeWidth="0.8" fill="none" />
      {/* axes */}
      <path d="M0 739L640 818M1137 881L1914 977" stroke="#ee8f8f" strokeWidth="1" />
      <path d="M543 970L640 818M1007 263L1085 143" stroke="#8f88ec" strokeWidth="1" />

      {/* box body */}
      <polygon points="640,818 1137,882 1215,772 1215,290 1179,285 859,245 793,247 665,425 640,480" fill="url(#faceFill)" />
      <polygon points="859,245 1179,285 1179,420 665,425 793,247 806,242 823,252 854,256" fill="#7f8a87" />
      <polygon points="1137,882 1215,772 1137,772" fill="#63635c" />
      <path d="M765 290V272Q770 224 810 211Q846 214 856 245L854 256L823 252Q806 232 793 247L763 290z" fill="url(#ringFill)" stroke="#222" />
      <path d="M766 262Q770 225 802 222Q835 225 847 255" fill="none" stroke="#222" />
      <path d="M1181 290Q1190 265 1222 263Q1255 266 1263 290z" fill="url(#ringFill)" stroke="#222" />
      <path d="M1188 290Q1195 273 1222 272Q1240 274 1252 290" fill="none" stroke="#222" />
      <path d="M859 245L1179 285M793 247L665 425M854 256L859 245" stroke="#222" fill="none" />
      <path d="M1019 265L1004 290" stroke="#7b75d8" />
      <path d="M665 410Q700 408 715 450V480H665z" fill="#7c7c74" stroke="#222" />
      <rect x="665" y="447" width="34" height="20" fill="#8a8a82" stroke="#222" />
      <path d="M640 480V818" stroke="#222" fill="none" />
      <path d="M640 818L1137 882" stroke="#8f2a2a" strokeWidth="1.2" fill="none" />
      <path d="M1137 771V882L1215 772" stroke="#222" fill="none" />
      <path d="M640 800L677 808V824M782 837V816L853 824V846M923 855V833L994 842V863M1065 872V851L1136 860L1162 821V840M641 663L663 667V730L641 725M1113 772V786L1136 789L1142 779V850M1193 773L1188 780V800" stroke="#222" fill="none" />

      {/* view cube */}
      <polygon points="1822,218 1867,224 1884,206 1878,196" fill="#b8b8b8" filter="url(#cubeShadow)" opacity="0.7" />
      <polygon points="1819,167 1835,152 1878,154 1870,172" fill="#eeeeee" fillOpacity="0.6" stroke="#777" strokeDasharray="5 2" />
      <polygon points="1819,167 1870,172 1867,218 1822,212" fill="#e2e2e2" fillOpacity="0.65" stroke="#777" strokeDasharray="5 2" />
      <polygon points="1870,172 1878,154 1876,200 1867,218" fill="#dcdcdc" fillOpacity="0.6" stroke="#777" strokeDasharray="5 2" />
      <text x="1844" y="198" textAnchor="middle" fontSize="12" fontWeight="700" fill="#a2a2a2" fontFamily="Liberation Sans" transform="rotate(4 1844 198)">FRONT</text>
      <text x="1851" y="163" textAnchor="middle" fontSize="6" fontStyle="italic" fill="#777" fontFamily="Liberation Sans" transform="rotate(6 1851 163)">TOP</text>
      <path d="M1835 145V152" stroke="#6fe87a" strokeWidth="1.5" />
      <text x="1830" y="144" fontSize="12" fill="#6fe87a" fontFamily="Liberation Sans">Y</text>
      <path d="M1877 197h8" stroke="#ff8a8a" />
      <text x="1885" y="203" fontSize="13" fill="#ff7a7a" fontFamily="Liberation Sans">X</text>
      <path d="M1821 212l-3 4" stroke="#7070ff" />
      <text x="1810" y="226" fontSize="13" fill="#7070ff" fontFamily="Liberation Sans">Z</text>
    </svg>
  );
};

const App = () => (
  <div className="flex h-[975px] w-[1914px] flex-col overflow-hidden bg-white [font-family:'Liberation_Sans',sans-serif]">
    <TitleBar />
    <Ribbon />
    <div className="relative flex-1">
      <Scene />
      <BrowserPanel />
      <ModifyMenu />
      <ParametersDialog />
      <div className="absolute bottom-[11px] left-0 z-10 flex h-[24px] w-[297px] items-center bg-[#f2f2f2] pl-[22px] pr-[1px] text-[10px] text-[#666]">
        <span className="flex-1">COMMENTS</span>
        <div className="mr-[9px] flex h-[9px] w-[9px] items-center justify-center rounded-full bg-[#333] text-[8px] leading-none text-white">+</div>
        <div className="h-[10px] w-[3px] border-x border-[#999]" />
      </div>
      <NavBar />
      <div className="absolute bottom-0 left-0 right-0 h-[5px] bg-[#f0f0f0]" />
    </div>
  </div>
);

export default App;
